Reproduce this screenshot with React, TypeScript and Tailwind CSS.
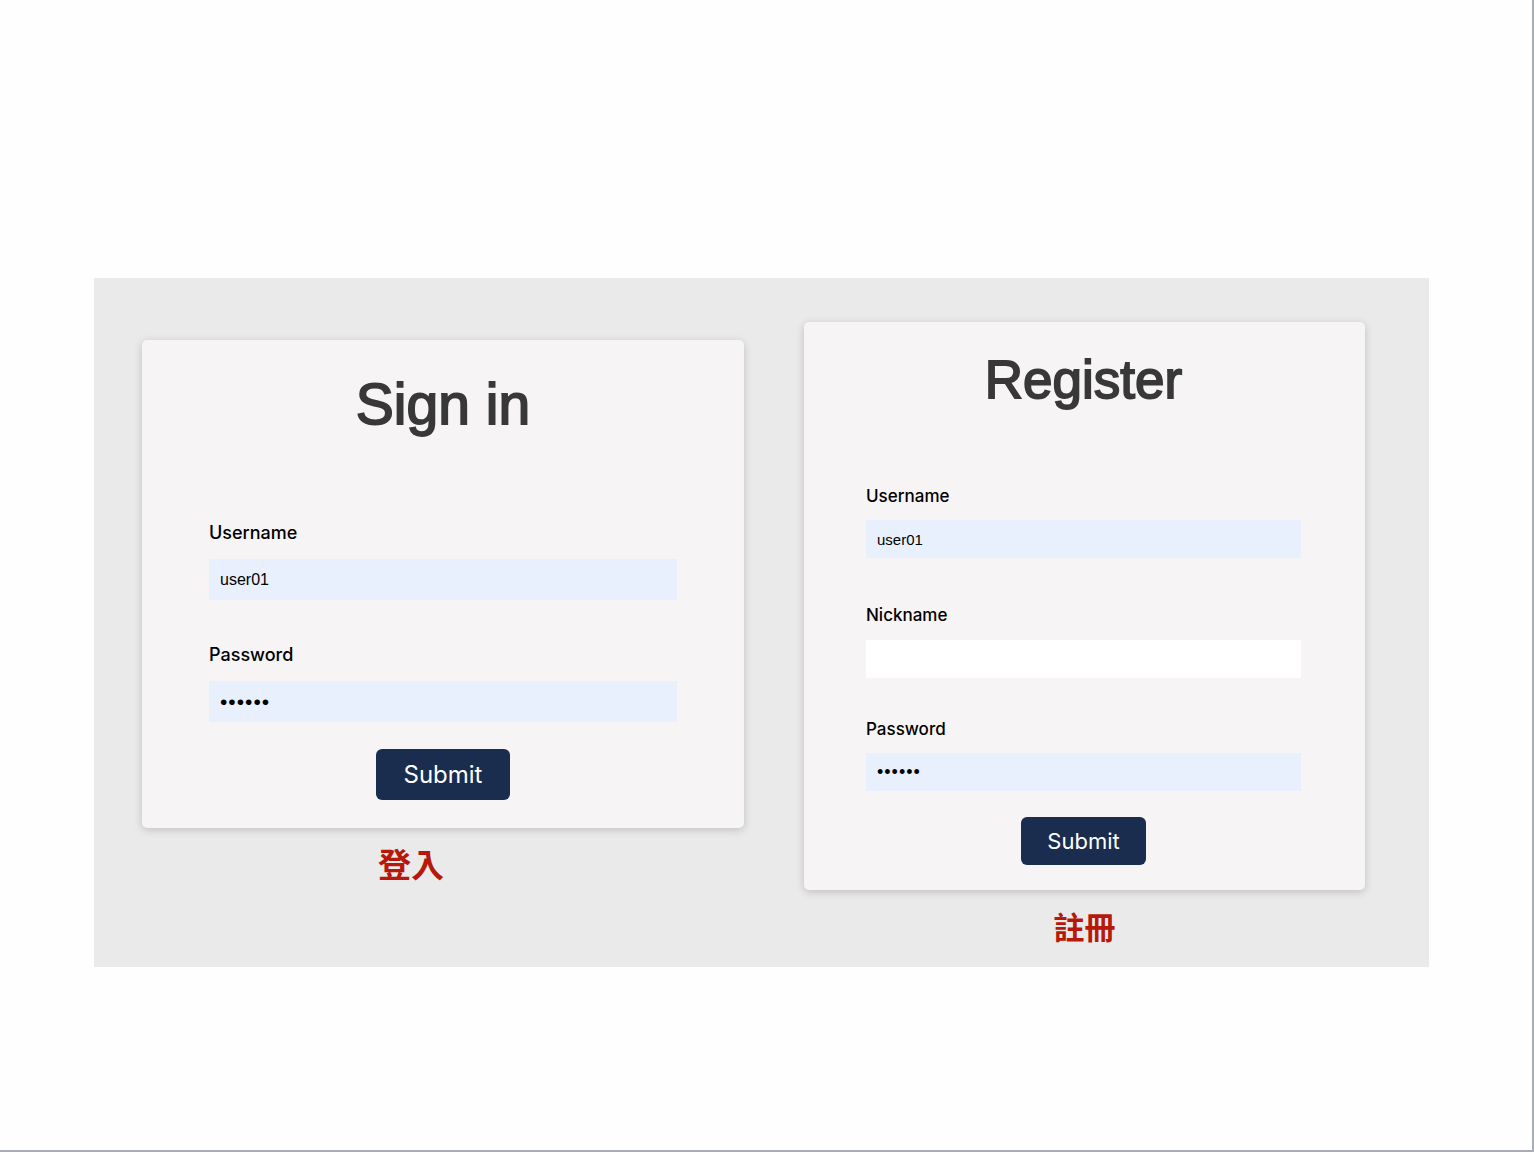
import React from "react";

const titleFont = { fontFamily: '"Liberation Sans", Arial, sans-serif' };

function Field({
  label,
  value,
  type = "text",
  filled = true,
  labelClass,
  inputClass,
}: {
  label: string;
  value: string;
  type?: string;
  filled?: boolean;
  labelClass: string;
  inputClass: string;
}) {
  return (
    <div className="flex flex-col">
      <label className={`font-[Inter,sans-serif] font-medium leading-none text-black ${labelClass}`}>{label}</label>
      <input
        type={type}
        defaultValue={value}
        readOnly
        className={`w-full border-0 px-[11px] text-black outline-none ${
          filled ? "bg-[#e8f0fe]" : "bg-white"
        } ${inputClass}`}
        style={{ fontFamily: '"Liberation Sans", Arial, sans-serif' }}
      />
    </div>
  );
}

export default function App() {
  return (
    <div className="box-border h-[1152px] w-[1534px] border-b-2 border-r-2 border-[#a9adb4] bg-[#fefefe]">
      <div className="ml-[94px] pt-[278px]">
        <div className="flex h-[689px] w-[1335px] items-start bg-[#eaeaea]">
          {/* sign in */}
          <div className="ml-[48px] mt-[62px] flex w-[602px] flex-col">
            <div className="flex flex-col rounded-[5px] bg-[#f6f4f5] px-[67px] pb-[28px] pt-[36px] shadow-[0_2px_8px_rgba(0,0,0,0.18)]">
              <h1
                className="text-center text-[57px] leading-none text-[#383838] [-webkit-text-stroke:1.8px_#383838]"
                style={titleFont}
              >
                Sign in
              </h1>
              <div className="mt-[91px]">
                <Field label="Username" value="user01" labelClass="text-[18px]" inputClass="mt-[17px] h-[41px] text-[16px]" />
              </div>
              <div className="mt-[46px]">
                <Field
                  label="Password"
                  value="123456"
                  type="password"
                  labelClass="text-[18px]"
                  inputClass="mt-[17px] h-[41px] text-[21px] tracking-[1px]"
                />
              </div>
              <div className="mt-[27px] flex justify-center">
                <button
                  type="button"
                  className="h-[51px] w-[134px] rounded-[6px] bg-[#1a2d4f] text-[24px] text-white"
                  style={{ fontFamily: "Inter, sans-serif" }}
                >
                  Submit
                </button>
              </div>
            </div>
            <p
              className="mt-[19px] pr-[64px] text-center text-[33px] font-bold leading-none text-[#b8180a]"
              style={{ fontFamily: '"Noto Sans CJK TC", sans-serif' }}
            >
              登入
            </p>
          </div>

          {/* register */}
          <div className="ml-[60px] mt-[44px] flex w-[561px] flex-col">
            <div className="flex flex-col rounded-[5px] bg-[#f6f4f5] pb-[25px] pl-[62px] pr-[64px] pt-[31px] shadow-[0_2px_8px_rgba(0,0,0,0.18)]">
              <h1
                className="text-center text-[53px] leading-none text-[#383838] [-webkit-text-stroke:1.8px_#383838]"
                style={titleFont}
              >
                Register
              </h1>
              <div className="mt-[82px]">
                <Field label="Username" value="user01" labelClass="text-[17px]" inputClass="mt-[15px] h-[38px] text-[15px] px-[10px]" />
              </div>
              <div className="mt-[49px]">
                <Field label="Nickname" value="" filled={false} labelClass="text-[17px]" inputClass="mt-[16px] h-[38px] text-[15px]" />
              </div>
              <div className="mt-[43px]">
                <Field
                  label="Password"
                  value="123456"
                  type="password"
                  labelClass="text-[17px]"
                  inputClass="mt-[15px] h-[38px] text-[18px] tracking-[1px] px-[10px]"
                />
              </div>
              <div className="mt-[26px] flex justify-center">
                <button
                  type="button"
                  className="h-[48px] w-[125px] rounded-[6px] bg-[#1a2d4f] text-[22px] text-white"
                  style={{ fontFamily: "Inter, sans-serif" }}
                >
                  Submit
                </button>
              </div>
            </div>
            <p
              className="mt-[20px] text-center text-[31px] font-bold leading-none text-[#b8180a]"
              style={{ fontFamily: '"Noto Sans CJK TC", sans-serif' }}
            >
              註冊
            </p>
          </div>
        </div>
      </div>
    </div>
  );
}
